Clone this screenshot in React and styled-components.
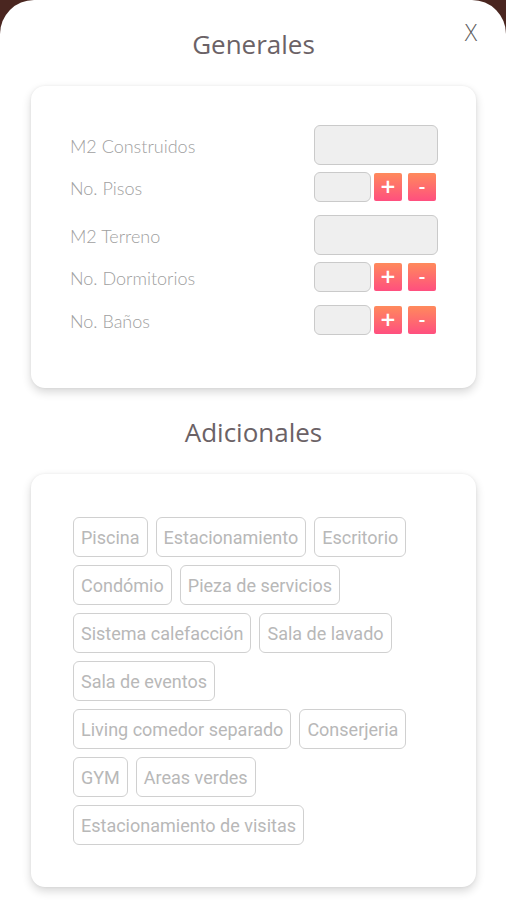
import React from 'react'
import styled, { createGlobalStyle } from 'styled-components'

const GlobalStyle = createGlobalStyle`
  html, body {
    margin: 0;
    padding: 0;
    background: #4a2620;
  }
  * { box-sizing: border-box; }
`

const Sheet = styled.div`
  position: relative;
  background: #ffffff;
  min-height: 900px;
  border-radius: 34px 34px 0 0;
  padding: 0 30px 12px 31px;
  font-family: "Open Sans", "Noto Sans", sans-serif;
`

const SectionTitle = styled.div`
  height: 86px;
  display: flex;
  align-items: center;
  justify-content: center;
  font-size: 26px;
  color: #6b6266;
  padding-top: 1px;
`

const Close = styled.button`
  position: absolute;
  top: 16px;
  right: 29px;
  border: none;
  background: transparent;
  font-family: "Open Sans", sans-serif;
  font-size: 23px;
  font-weight: 300;
  color: #5f5f5f;
  padding: 0;
  cursor: pointer;
`

const Card = styled.div`
  background: #fff;
  border-radius: 14px;
  box-shadow: 0 4px 10px rgba(0, 0, 0, 0.16), 0 0 3px rgba(0, 0, 0, 0.06);
  padding: ${p => p.$pad};
`

const FieldRow = styled.div`
  display: flex;
  align-items: center;
  justify-content: space-between;
  padding-bottom: ${p => (p.$counter ? '6px' : '0')};
  & + & {
    margin-top: 7px;
  }
`

const Label = styled.span`
  font-family: "Lato", sans-serif;
  font-size: 18px;
  font-weight: 300;
  color: #a0a0a0;
  margin-top: 2px;
`

const Input = styled.div`
  width: ${p => (p.$small ? '57px' : '124px')};
  height: ${p => (p.$small ? '30px' : '40px')};
  background: #efefef;
  border: 1.5px solid #cacaca;
  border-radius: 6px;
`

const Counter = styled.div`
  display: flex;
  align-items: center;
  width: 124px;
`

const StepButton = styled.button`
  width: 28px;
  height: 28px;
  margin-left: ${p => (p.$minus ? '6px' : '3px')};
  border: none;
  border-radius: 2px;
  background: linear-gradient(180deg, #ff8a5c 0%, #ff4f7f 100%);
  color: #fff;
  font-family: "Open Sans", sans-serif;
  font-size: ${p => (p.$minus ? '20px' : '26px')};
  font-weight: 600;
  line-height: 1;
  padding: 0 0 3px;
  display: flex;
  align-items: center;
  justify-content: center;
`

const ChipList = styled.div`
  display: flex;
  flex-direction: column;
  gap: 8px;
`

const ChipRow = styled.div`
  display: flex;
  gap: 8px;
`

const Chip = styled.span`
  height: 40px;
  display: inline-flex;
  align-items: center;
  padding: 0 7px;
  border: 1.5px solid #d0d0d0;
  border-radius: 6px;
  font-family: "Roboto", sans-serif;
  font-size: 18px;
  color: #b8b8b8;
  white-space: nowrap;
`

const fields = [
  { label: 'M2 Construidos', counter: false },
  { label: 'No. Pisos', counter: true },
  { label: 'M2 Terreno', counter: false },
  { label: 'No. Dormitorios', counter: true },
  { label: 'No. Baños', counter: true },
]

const chipRows = [
  ['Piscina', 'Estacionamiento', 'Escritorio'],
  ['Condómio', 'Pieza de servicios'],
  ['Sistema calefacción', 'Sala de lavado'],
  ['Sala de eventos'],
  ['Living comedor separado', 'Conserjeria'],
  ['GYM', 'Areas verdes'],
  ['Estacionamiento de visitas'],
]

export default function App() {
  return (
    <>
      <GlobalStyle />
      <Sheet>
        <Close>X</Close>
        <SectionTitle>Generales</SectionTitle>
        <Card $pad="39px 38px 47px 39px">
          {fields.map(f => (
            <FieldRow key={f.label} $counter={f.counter}>
              <Label>{f.label}</Label>
              {f.counter ? (
                <Counter>
                  <Input $small />
                  <StepButton>+</StepButton>
                  <StepButton $minus>-</StepButton>
                </Counter>
              ) : (
                <Input />
              )}
            </FieldRow>
          ))}
        </Card>
        <SectionTitle>Adicionales</SectionTitle>
        <Card $pad="43px 42px 42px 42px">
          <ChipList>
            {chipRows.map((row, i) => (
              <ChipRow key={i}>
                {row.map(c => (
                  <Chip key={c}>{c}</Chip>
                ))}
              </ChipRow>
            ))}
          </ChipList>
        </Card>
      </Sheet>
    </>
  )
}
